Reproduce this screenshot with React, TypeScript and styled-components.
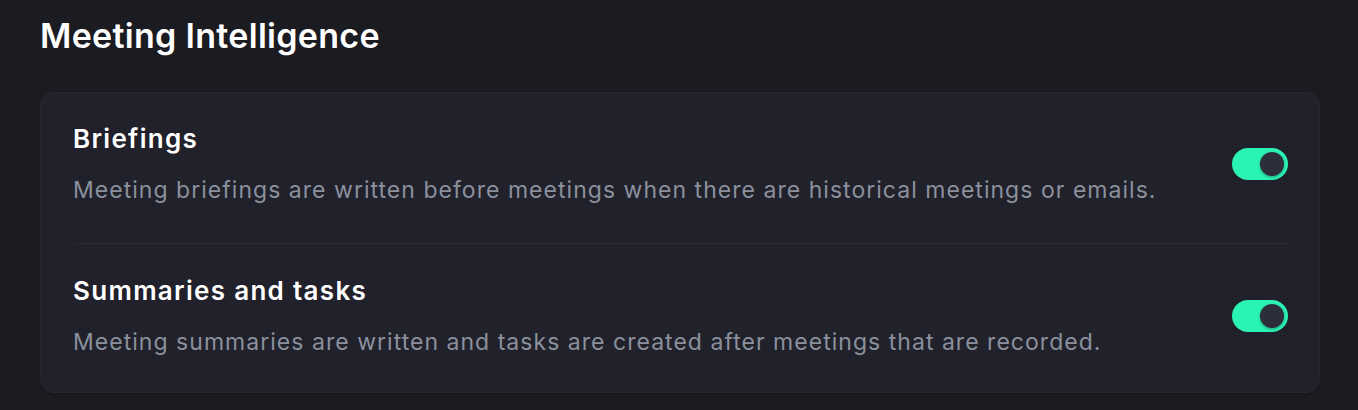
import React, { useState } from "react";
import styled, { createGlobalStyle } from "styled-components";

const GlobalStyle = createGlobalStyle`
  html, body {
    margin: 0;
    padding: 0;
    background: #1b1b22;
  }
  body {
    font-family: Inter, "Noto Sans", sans-serif;
    -webkit-font-smoothing: antialiased;
  }
`;

type SettingType = {
    id: string
    title: string
    description: string
    enabled: boolean
}

const initialSettings: SettingType[] = [
    {
        id: "briefings",
        title: "Briefings",
        description: "Meeting briefings are written before meetings when there are historical meetings or emails.",
        enabled: true,
    },
    {
        id: "summaries",
        title: "Summaries and tasks",
        description: "Meeting summaries are written and tasks are created after meetings that are recorded.",
        enabled: true,
    },
];

export default function App() {
    const [settings, setSettings] = useState(initialSettings);

    const toggle = (id: string) => {
        setSettings(s => s.map(item => item.id === id ? { ...item, enabled: !item.enabled } : item));
    };

    return (
        <Page>
            <GlobalStyle/>
            <Heading>Meeting Intelligence</Heading>
            <Card>
                {settings.map(item => (
                    <Row key={item.id}>
                        <Text>
                            <Title>{item.title}</Title>
                            <Description>{item.description}</Description>
                        </Text>
                        <Switch $on={item.enabled} onClick={() => toggle(item.id)} aria-pressed={item.enabled}>
                            <Knob $on={item.enabled}/>
                        </Switch>
                    </Row>
                ))}
            </Card>
        </Page>
    );
}

const Page = styled.div`
  padding: 16px 38px 16px 40px;
  min-height: 410px;
  box-sizing: border-box;
`

const Heading = styled.h2`
  margin: 0 0 36px;
  color: #ffffff;
  font-size: 34px;
  font-weight: 600;
  line-height: 40px;
  letter-spacing: 0.3px;
`

const Card = styled.div`
  background: #21212b;
  border: 1px solid #26262f;
  border-radius: 13px;
  padding: 0 31px 0 32px;
  box-shadow: 0 1px 2px rgba(0, 0, 0, 0.25);
`

const Row = styled.div`
  display: flex;
  align-items: center;
  justify-content: space-between;
  padding: 30px 0 39px;

  & + & {
    border-top: 1px solid #2a2a35;
    padding-top: 31px;
    padding-bottom: 36px;
  }
`

const Text = styled.div`
  display: flex;
  flex-direction: column;
  gap: 21px;
`

const Title = styled.div`
  color: #ffffff;
  font-size: 26px;
  font-weight: 600;
  line-height: 32px;
  letter-spacing: 1.3px;
`

const Description = styled.div`
  color: #8b909d;
  font-size: 23px;
  line-height: 28px;
  letter-spacing: 1.03px;
`

const Switch = styled.button<{ $on: boolean }>`
  position: relative;
  width: 56px;
  height: 32px;
  padding: 0;
  border: none;
  border-radius: 16px;
  background: ${p => p.$on ? "#2af3b3" : "#3a3c48"};
  cursor: pointer;
  flex-shrink: 0;
`

const Knob = styled.span<{ $on: boolean }>`
  position: absolute;
  top: 4px;
  left: ${p => p.$on ? "28px" : "4px"};
  width: 24px;
  height: 24px;
  border-radius: 50%;
  background: #2c2e3a;
  box-shadow: 0 1px 3px rgba(0, 0, 0, 0.35);
`
